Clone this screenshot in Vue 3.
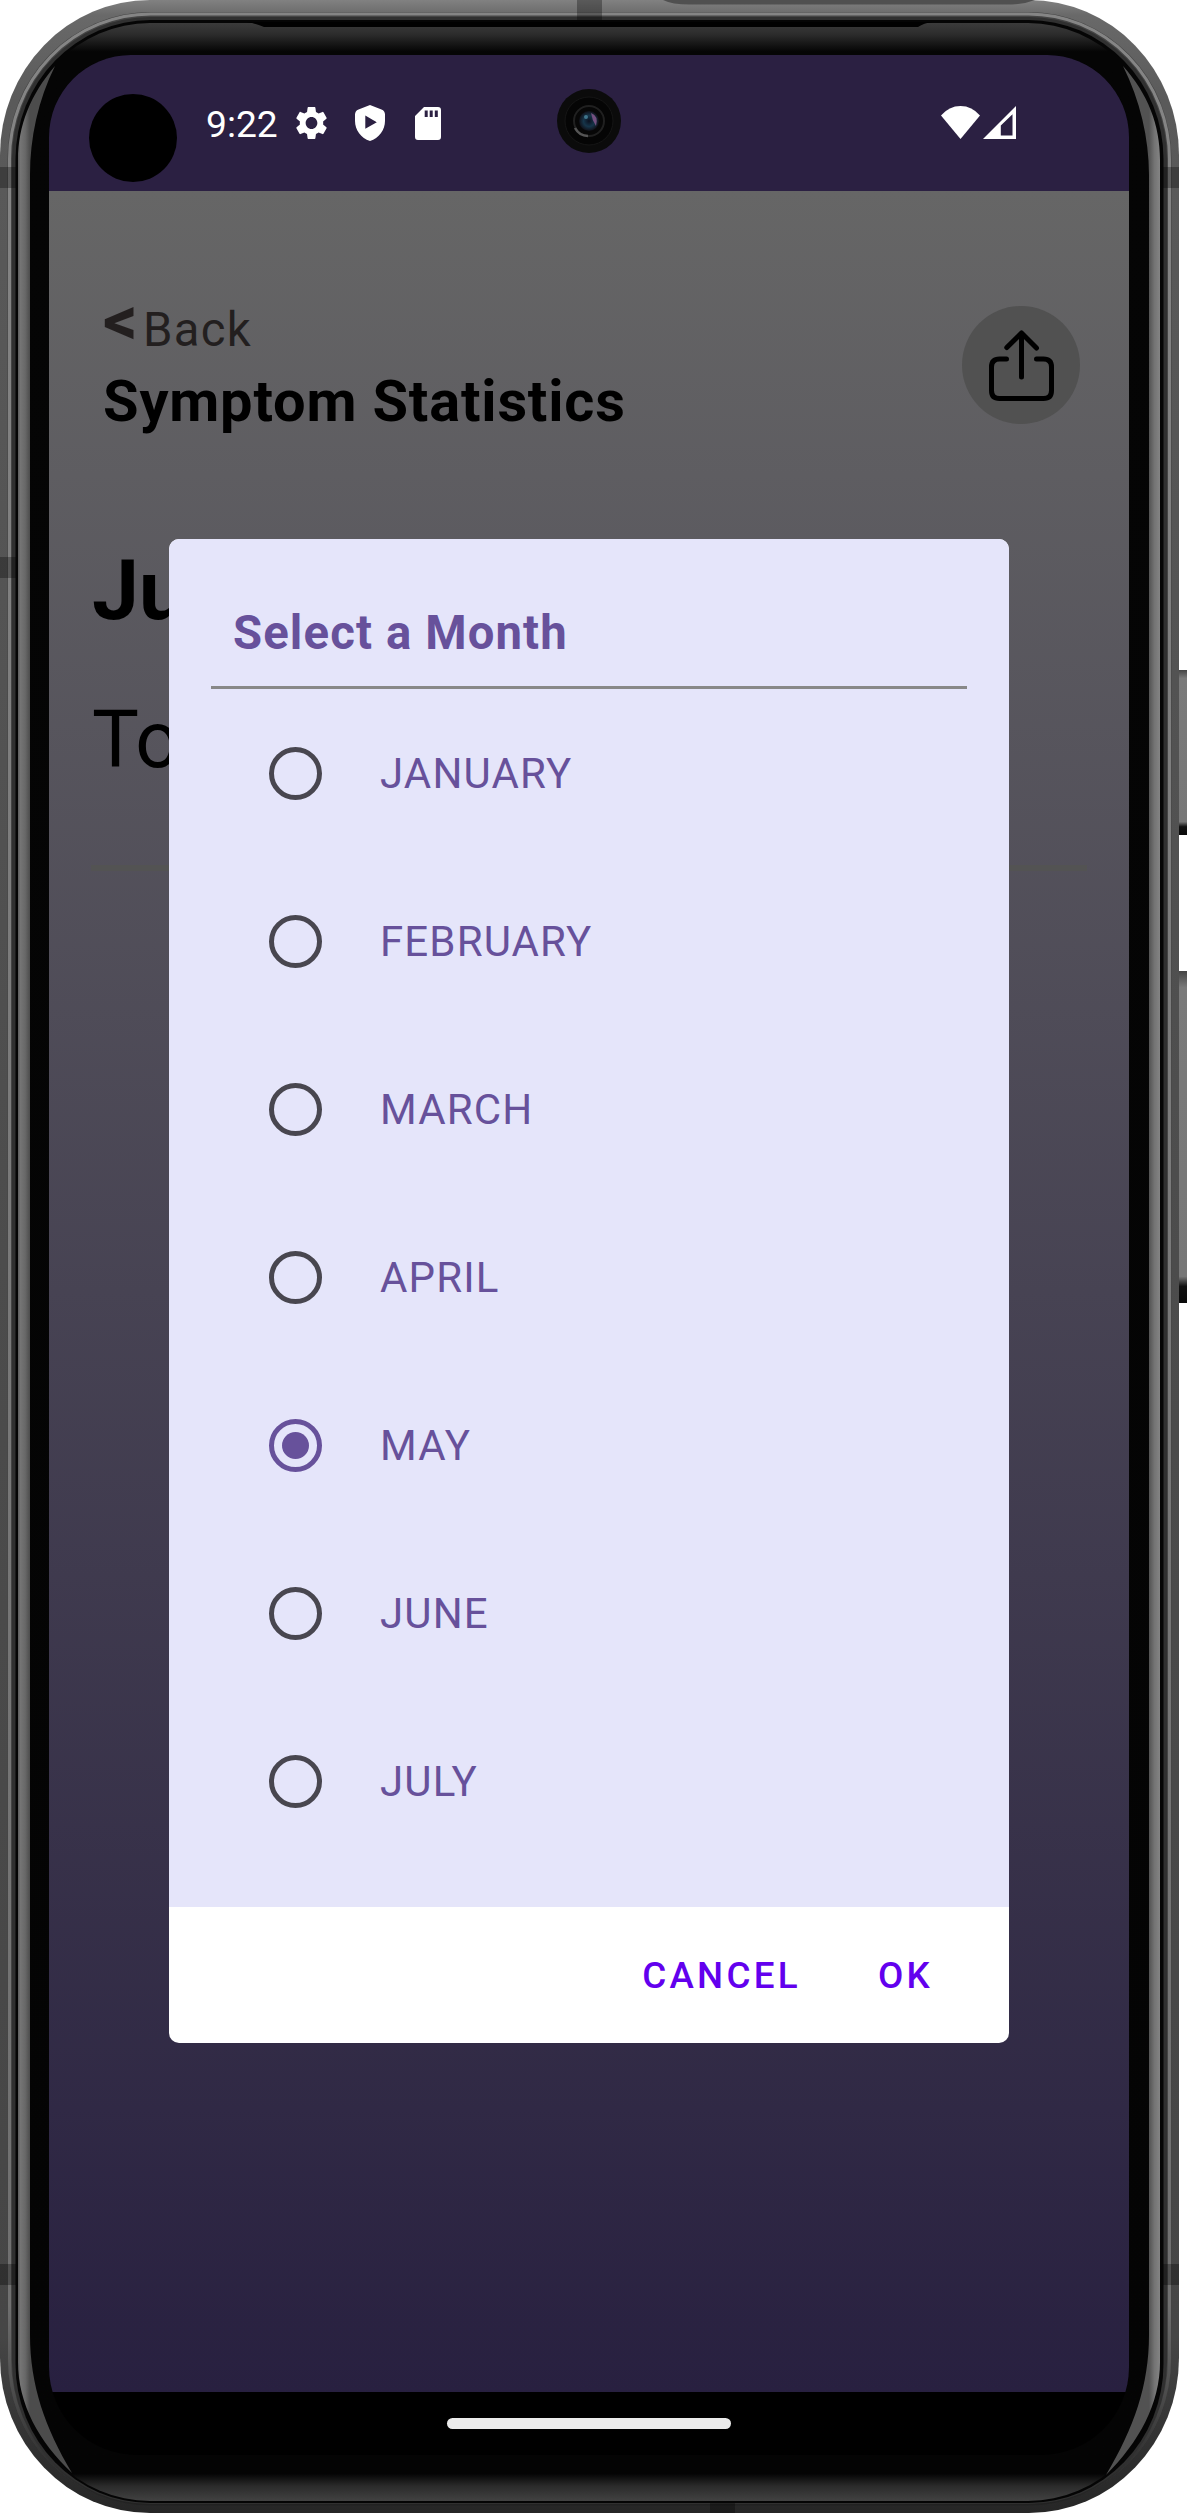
<script setup>
import { ref } from 'vue'

const months = ['JANUARY', 'FEBRUARY', 'MARCH', 'APRIL', 'MAY', 'JUNE', 'JULY']
const selected = ref('MAY')
</script>

<template>
  <div class="device">
    <svg class="shell" width="1187" height="2513" viewBox="0 0 1187 2513" aria-hidden="true">
      <defs>
        <linearGradient id="outer" x1="0" y1="0" x2="0" y2="1">
          <stop offset="0" stop-color="#818181" />
          <stop offset="0.006" stop-color="#696969" />
          <stop offset="0.04" stop-color="#5a5a5a" />
          <stop offset="0.5" stop-color="#4c4c4c" />
          <stop offset="0.93" stop-color="#464646" />
          <stop offset="0.975" stop-color="#303030" />
          <stop offset="1" stop-color="#262626" />
        </linearGradient>
        <linearGradient id="ridge" x1="0" y1="0" x2="0" y2="1">
          <stop offset="0" stop-color="#858585" />
          <stop offset="0.92" stop-color="#707070" />
          <stop offset="0.98" stop-color="#333" />
          <stop offset="1" stop-color="#222" />
        </linearGradient>
        <linearGradient id="bezel" gradientUnits="userSpaceOnUse" x1="0" y1="22" x2="0" y2="2501">
          <stop offset="0" stop-color="#3c3c3c" />
          <stop offset="0.005" stop-color="#2c2c2c" />
          <stop offset="0.012" stop-color="#050505" />
          <stop offset="0.989" stop-color="#040404" />
          <stop offset="0.994" stop-color="#2b2b2b" />
          <stop offset="1" stop-color="#424242" />
        </linearGradient>
        <linearGradient id="stripL" gradientUnits="userSpaceOnUse" x1="18" y1="0" x2="30" y2="0">
          <stop offset="0" stop-color="#5c5c5c" />
          <stop offset="0.2" stop-color="#757575" />
          <stop offset="0.6" stop-color="#686868" />
          <stop offset="1" stop-color="#4c4c4c" />
        </linearGradient>
        <linearGradient id="stripR" gradientUnits="userSpaceOnUse" x1="1149" y1="0" x2="1160" y2="0">
          <stop offset="0" stop-color="#525252" />
          <stop offset="0.5" stop-color="#747474" />
          <stop offset="1" stop-color="#848484" />
        </linearGradient>
        <linearGradient id="key" x1="0" y1="0" x2="0" y2="1">
          <stop offset="0" stop-color="#444" />
          <stop offset="0.05" stop-color="#7a7a7a" />
          <stop offset="0.92" stop-color="#777" />
          <stop offset="0.95" stop-color="#111" />
          <stop offset="1" stop-color="#090909" />
        </linearGradient>
      </defs>
      <!-- side keys -->
      <rect x="1176" y="670" width="14" height="165" rx="3" fill="url(#key)" />
      <rect x="1176" y="971" width="14" height="332" rx="3" fill="url(#key)" />
      <!-- metal frame -->
      <rect x="0" y="0" width="1179" height="2513" rx="150" ry="155" fill="url(#outer)" />
      <path d="M663 0H1035Q1025 4 1012 4.500H690Q672 4.500 663 0Z" fill="#505050" />
      <rect x="7.500" y="12" width="1164" height="2493" rx="143" ry="147" fill="#444" />
      <rect x="9.500" y="14" width="1160" height="2490" rx="141" ry="145" fill="none" stroke="url(#ridge)" stroke-width="3" />
      <rect x="12" y="17" width="1155" height="2487" rx="138" ry="142" fill="#303030" />
      <rect x="15.500" y="20" width="1148" height="2483" rx="135" ry="139" fill="#050505" />
      <!-- antenna bands -->
      <g fill="#000" fill-opacity="0.3">
        <rect x="0" y="167" width="16" height="21" />
        <rect x="0" y="557" width="16" height="21" />
        <rect x="0" y="2264" width="16" height="21" />
        <rect x="1163" y="167" width="16" height="21" />
        <rect x="1163" y="2264" width="16" height="21" />
        <rect x="577" y="0" width="25" height="20" />
        <rect x="710" y="2503" width="25" height="10" />
      </g>
      <!-- bezel glass -->
      <rect x="18" y="23" width="1142" height="2478" rx="132" ry="137" fill="url(#bezel)" />
      <path d="M247 22H932Q924 23 918 27H264Q254 23 247 22Z" fill="#010101" />
      <path d="M55 66C31 94 18 125 18 160V2362C18 2404 39 2442 72 2473C45 2428 30 2385 30 2335V175C30 138 38 100 55 66Z" fill="url(#stripL)" />
      <path d="M1123 66C1148 94 1160 125 1160 160V2362C1160 2404 1139 2442 1106 2475C1134 2428 1149 2385 1149 2335V175C1149 138 1140 100 1123 66Z" fill="url(#stripR)" />
    </svg>

    <main class="screen">
      <header class="status">
        <span class="cutout"></span>
        <span class="clock">9:22</span>
        <svg class="gear" width="39" height="40" viewBox="0 0 24 24" preserveAspectRatio="none"><path fill="#fff" d="M19.140 12.940c.040-.300.060-.610.060-.940 0-.320-.020-.640-.070-.940l2.030-1.580a.490.490 0 0 0 .120-.610l-1.920-3.320a.488.488 0 0 0-.590-.220l-2.390.960c-.500-.380-1.030-.700-1.620-.940l-.360-2.540a.484.484 0 0 0-.480-.410h-3.840c-.240 0-.430.170-.470.410l-.360 2.540c-.590.240-1.130.570-1.620.940l-2.390-.960c-.220-.080-.470 0-.590.220L2.740 8.870c-.120.210-.080.470.120.610l2.030 1.580c-.050.300-.090.630-.090.940s.020.640.070.940l-2.030 1.580a.490.490 0 0 0-.120.610l1.920 3.320c.120.220.370.290.590.220l2.390-.960c.500.380 1.030.700 1.620.940l.360 2.540c.050.240.240.410.480.410h3.840c.240 0 .440-.170.470-.410l.360-2.540c.590-.240 1.130-.560 1.620-.940l2.390.960c.220.080.470 0 .590-.220l1.920-3.320c.120-.220.070-.470-.120-.610l-2.010-1.580zM12 15.600c-1.980 0-3.600-1.620-3.600-3.600s1.620-3.600 3.600-3.600 3.600 1.620 3.600 3.600-1.620 3.600-3.600 3.600z" /></svg>
        <svg class="shield" width="30" height="36" viewBox="0 0 30 36"><path fill="#fff" fill-rule="evenodd" d="M15 0L26.500 4.400Q30 5.800 30 9.500V16C30 25 24 33 15 36C6 33 0 25 0 16V9.500Q0 5.800 3.500 4.400ZM10.300 10.500V23.800L21.800 17.200Z" /></svg>
        <svg class="sd" width="26" height="33" viewBox="0 0 26 33"><path fill="#fff" fill-rule="evenodd" d="M9 0H23Q26 0 26 3V30Q26 33 23 33H3Q0 33 0 30V9ZM9.700 3.500V10H12.700V3.500ZM14.700 3.500V10H17.700V3.500ZM19.800 3.500V10H22.800V3.500Z" /></svg>
        <svg class="camera" width="64" height="66" viewBox="0 0 64 66">
          <defs>
            <radialGradient id="lens"><stop offset="0" stop-color="#0c1120" /><stop offset="0.550" stop-color="#16354a" /><stop offset="1" stop-color="#101018" /></radialGradient>
          </defs>
          <circle cx="32" cy="33" r="32" fill="#0b0b0b" />
          <circle cx="32" cy="33" r="24" fill="#050505" stroke="#151515" />
          <circle cx="32" cy="33" r="15" fill="#070707" stroke="#202020" stroke-width="2" />
          <path d="M18 40A15 15 0 0 0 31 48" fill="none" stroke="#555" stroke-width="2.500" />
          <circle cx="32" cy="33" r="10" fill="url(#lens)" />
          <path d="M34 25Q42 28 39 38Q35 32 34 25Z" fill="#74507f" />
          <circle cx="29" cy="29" r="2" fill="#40758c" />
        </svg>
        <svg class="wifi" width="39" height="33" viewBox="0 0 39 33"><path fill="#fff" d="M0 9.500Q8 0 19.500 0T39 9.500L19.500 33Z" /></svg>
        <svg class="signal" width="33" height="33" viewBox="0 0 33 33"><path fill="#fff" fill-rule="evenodd" d="M0 33L33 0V33ZM17.800 19.500V29.500H29.500V8.300Z" /></svg>
      </header>

      <section class="page">
        <div class="topbar">
          <div>
            <div class="back"><span class="chevron">&lt;</span><span>Back</span></div>
            <h1>Symptom Statistics</h1>
          </div>
          <button class="share" aria-label="Share">
            <svg width="118" height="118" viewBox="0 0 118 118" fill="none" stroke="#000" stroke-width="5" stroke-linecap="round" stroke-linejoin="round"><path d="M59.500 71V27M44.800 41.500L59.500 27L74.500 42M44.500 53H37.500Q29.500 53 29.500 61V84.500Q29.500 92.500 37.500 92.500H81.500Q89.500 92.500 89.500 84.500V61Q89.500 53 81.500 53H74.500" /></svg>
          </button>
        </div>
        <div class="month">Ju</div>
        <div class="total">To</div>
        <hr class="rule">
      </section>

      <footer class="nav"><span class="pill"></span></footer>

      <div class="dialog" role="dialog" aria-label="Select a Month">
        <div class="body">
          <h2>Select a Month</h2>
          <ul>
            <li v-for="m in months" :key="m" @click="selected = m">
              <span class="radio" :class="{ on: m === selected }"></span>
              <span class="label">{{ m }}</span>
            </li>
          </ul>
        </div>
        <div class="actions">
          <button>CANCEL</button>
          <button>OK</button>
        </div>
      </div>
    </main>
  </div>
</template>

<style>
body { margin: 0; background: #fff; }
</style>

<style scoped>
* { box-sizing: border-box; }
.device {
  position: relative;
  width: 1187px;
  height: 2513px;
  padding: 55px 58px 58px 49px;
  overflow: hidden;
  font-family: Roboto, sans-serif;
}
.shell { position: absolute; left: 0; top: 0; display: block; }
.screen {
  position: relative;
  display: flex;
  flex-direction: column;
  width: 1080px;
  height: 2400px;
  border-radius: 82px 82px 88px 88px;
  overflow: hidden;
  background: #000;
}
.status {
  display: flex;
  align-items: flex-start;
  height: 136px;
  flex: none;
  padding-left: 40px;
  background: #2b2042;
}
.cutout { width: 88px; height: 88px; margin-top: 39px; border-radius: 50%; background: #000; }
.clock { width: 72px; margin: 47px 0 0 29px; font-size: 37.200px; line-height: 44px; color: #fff; white-space: nowrap; }
.gear { margin: 48px 0 0 14px; }
.shield { margin: 50px 0 0 24px; }
.sd { margin: 52px 0 0 30px; }
.camera { margin: 33px 0 0 116px; }
.wifi { margin: 51px 0 0 320px; }
.signal { margin: 51px 0 0 3px; }

.page {
  height: 2201px;
  flex: none;
  background: linear-gradient(#666, #282040);
  color: #000;
}
.topbar { display: flex; justify-content: space-between; padding: 115px 49px 0 54px; }
.back {
  display: flex;
  height: 58px;
  font-size: 47.250px;
  line-height: 49px;
  letter-spacing: 1.300px;
  color: #231f1f;
}
.chevron { width: 40px; font-size: 68px; font-weight: 700; line-height: 31px; letter-spacing: 0; }
h1 { margin: 0; padding-top: 3px; font-size: 57.750px; line-height: 68px; font-weight: 700; letter-spacing: 0.820px; white-space: nowrap; }
.share { width: 118px; height: 118px; padding: 0; border: 0; border-radius: 50%; background: #515151; }
.share svg { display: block; }
.month { margin: 107px 0 0 43px; font-size: 84px; line-height: 98px; font-weight: 700; }
.total { margin: 54px 0 0 43px; font-size: 78.750px; line-height: 92px; }
.rule { height: 6px; margin: 79px 42px 0; border: 0; background: #535353; }

.nav { height: 63px; display: flex; justify-content: center; padding-top: 26px; }
.pill { width: 284px; height: 11px; border-radius: 6px; background: #ebebeb; }

.dialog {
  position: absolute;
  left: 120px;
  top: 484px;
  width: 840px;
  height: 1504px;
  border-radius: 10px;
  overflow: hidden;
  background: #fff;
}
.body { height: 1368px; padding: 0 42px; background: #e5e5fa; color: #67519b; }
h2 {
  height: 150px;
  margin: 0;
  padding: 67px 0 0 22px;
  border-bottom: 3px solid #888;
  font-size: 47.250px;
  line-height: 55px;
  font-weight: 700;
  letter-spacing: 1.130px;
}
ul { list-style: none; margin: 0; padding: 0 0 0 58px; }
li {
  display: flex;
  align-items: center;
  gap: 58px;
  height: 168px;
  font-size: 42px;
  line-height: 50px;
  letter-spacing: 1.130px;
}
.label { padding-top: 2px; }
.radio {
  display: flex;
  align-items: center;
  justify-content: center;
  width: 53px;
  height: 53px;
  border: 5.500px solid #48464f;
  border-radius: 50%;
}
.radio.on { border-color: #67519b; }
.radio.on::after { content: ''; width: 27px; height: 27px; border-radius: 50%; background: #67519b; }
.actions {
  display: flex;
  justify-content: flex-end;
  height: 136px;
  padding: 47px 76px 0 0;
  gap: 77px;
}
.actions button {
  height: 44px;
  padding: 0;
  border: 0;
  background: none;
  font: 500 36.750px/44px Roboto, sans-serif;
  letter-spacing: 3.280px;
  color: #6200ee;
}
</style>
